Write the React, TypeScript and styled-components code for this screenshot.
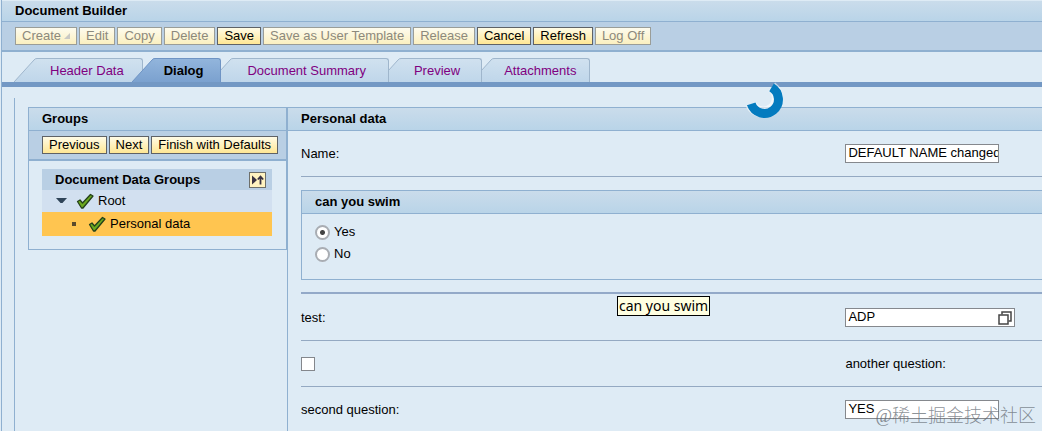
import React from "react";
import styled, { createGlobalStyle, css } from "styled-components";

const GlobalStyle = createGlobalStyle`
  * { box-sizing: border-box; }
  html, body { margin: 0; padding: 0; }
  body {
    overflow: hidden;
    background: #deebf5;
    color: #000;
    font-family: "Liberation Sans", Arial, sans-serif;
    font-size: 13px;
    line-height: 16px;
  }
`;

const headerFill = "linear-gradient(#cadceb, #b9d4e8)";
const line = "#8fb0d0";

const Page = styled.main`
  position: relative;
  display: flex;
  flex-direction: column;
  min-height: 100vh;
  margin-left: 1px;
  padding-top: 1px;
  border-left: 1px solid ${line};
`;

const TitleBar = styled.h1`
  margin: 0;
  padding: 2px 13px;
  height: 21px;
  font-size: 13px;
  line-height: 16px;
  background: ${headerFill};
  border-bottom: 1px solid ${line};
`;

const Toolbar = styled.div`
  display: flex;
  align-items: center;
  gap: 2px;
  height: 30px;
  padding: 0 13px;
  background: #b9cfe4;
  border-bottom: 2px solid ${line};
`;

const Button = styled.button`
  display: flex;
  align-items: center;
  gap: 3px;
  flex: none;
  height: 18px;
  padding: 0 6px;
  border: 1px solid #5f6266;
  background: linear-gradient(#fffbe6, #ffe794);
  color: #000;
  font: inherit;
  line-height: 16px;
  white-space: nowrap;
  &:disabled {
    border-color: #9a9d98;
    background: linear-gradient(#fdfbee, #fbf0c0);
    color: #8c897c;
  }
`;

const Tabs = styled.nav`
  display: flex;
  align-items: flex-end;
  height: 35px;
  padding-left: 12px;
  border-bottom: 5px solid #7398c4;
`;

const Tab = styled.a<{ $active?: boolean; $order: number; $left: number; $right: number }>`
  position: relative;
  z-index: ${(p) => (p.$active ? 9 : p.$order)};
  display: flex;
  height: 24px;
  margin-right: -11px;
  color: ${(p) => (p.$active ? "#000" : "#800080")};
  font-weight: ${(p) => (p.$active ? 700 : 400)};
  text-decoration: none;
  white-space: nowrap;
  span {
    padding: 4px ${(p) => p.$right}px 0 ${(p) => p.$left}px;
    border: 1px solid ${(p) => (p.$active ? "#6f94c4" : "#9fb6cc")};
    border-width: 1px 1px 0 0;
    border-top-right-radius: 3px;
    background: ${(p) =>
      p.$active ? "linear-gradient(#92b5dc, #7ba1cf)" : "linear-gradient(#d0e1ef, #bfd6ea)"};
  }
`;

const Slant = ({ active }: { active?: boolean }) => (
  <svg width="23" height="24" viewBox="0 0 23 24" aria-hidden="true">
    <defs>
      <linearGradient id={active ? "slant-on" : "slant-off"} x1="0" y1="0" x2="0" y2="1">
        <stop offset="0" stopColor={active ? "#92b5dc" : "#d0e1ef"} />
        <stop offset="1" stopColor={active ? "#7ba1cf" : "#bfd6ea"} />
      </linearGradient>
    </defs>
    <path d="M0 24 L20 2 Q21 0 23 0 V24 Z" fill={`url(#${active ? "slant-on" : "slant-off"})`} />
    <path d="M0 24 L20 2 Q21 .5 23 .5" fill="none" stroke={active ? "#6f94c4" : "#9fb6cc"} />
  </svg>
);

const Content = styled.div`
  flex: 1;
  display: flex;
  margin: 11px 0 0 12px;
  padding: 9px 0 0 13px;
  border-left: 1px solid ${line};
`;

const Groups = styled.section`
  flex: none;
  align-self: flex-start;
  width: 259px;
  height: 143px;
  border: 1px solid ${line};
`;

const PanelTitle = styled.h2`
  margin: 0;
  padding: 3px 13px;
  height: 23px;
  font-size: 13px;
  line-height: 16px;
  background: ${headerFill};
  border-bottom: 1px solid ${line};
`;

const Tree = styled.div`
  margin: 8px 14px 0 13px;
`;

const TreeHeader = styled.div`
  display: flex;
  align-items: center;
  justify-content: space-between;
  height: 21px;
  padding: 0 6px 0 13px;
  background: #b9cfe4;
  font-weight: 700;
`;

const TreeRow = styled.div<{ $selected?: boolean }>`
  display: flex;
  align-items: center;
  height: ${(p) => (p.$selected ? 24 : 22)}px;
  padding-left: ${(p) => (p.$selected ? 26 : 14)}px;
  background: ${(p) => (p.$selected ? "#ffc550" : "#d2e0f0")};
`;

const RowMark = styled.span`
  display: flex;
  width: 20px;
`;

const IconButton = styled.button`
  display: flex;
  width: 17px;
  height: 16px;
  padding: 0;
  border: 1px solid #6d6f6a;
  background: #fff3c0;
`;

const Form = styled.section`
  flex: 1;
  min-width: 0;
  border-left: 1px solid ${line};
  border-top: 1px solid ${line};
`;

const FormBody = styled.div`
  padding-left: 13px;
`;

const Row = styled.div`
  display: grid;
  grid-template-columns: 36fr 13fr;
  align-items: center;
  height: 46px;
  border-bottom: 1px solid #94a9c2;
`;

const FieldSet = styled.fieldset`
  min-width: 0;
  height: 90px;
  margin: 13px 0 12px;
  padding: 0;
  border: 1px solid ${line};
  border-right: 0;
`;

const Legend = styled.legend`
  float: left;
  width: 100%;
  height: 23px;
  padding: 3px 13px;
  background: ${headerFill};
  border-bottom: 1px solid ${line};
  font-weight: 700;
`;

const Options = styled.div`
  clear: both;
  display: flex;
  flex-direction: column;
  gap: 6px;
  padding: 10px 13px 0;
`;

const Option = styled.label`
  display: flex;
  align-items: center;
  gap: 4px;
`;

const Radio = styled.input`
  appearance: none;
  width: 15px;
  height: 15px;
  margin: 0;
  border: 2px solid #a9adb3;
  border-radius: 50%;
  background: #fff;
  &:checked {
    background: radial-gradient(circle, #444 0 2px, #fff 3px);
  }
`;

const Check = styled.input`
  appearance: none;
  display: block;
  width: 14px;
  height: 14px;
  margin: 0;
  border: 1px solid #84878c;
  background: #fff;
`;

const ThickRule = styled.hr`
  height: 2px;
  margin: 0 0 1px;
  border: 0;
  background: #93a9c8;
`;

const fieldLook = css`
  height: 19px;
  border: 1px solid #85888d;
  background: #fff;
`;

const TextInput = styled.input`
  ${fieldLook}
  width: 154px;
  padding: 0 0 2px 2px;
  color: #000;
  font: inherit;
  outline: 0;
`;

const Lookup = styled.div`
  ${fieldLook}
  display: flex;
  align-items: center;
  width: 170px;
  input {
    flex: 1;
    min-width: 0;
    height: 17px;
    padding: 0 0 2px 2px;
    border: 0;
    background: none;
    font: inherit;
  }
  button {
    display: flex;
    padding: 0 2px 0 0;
    border: 0;
    background: none;
  }
`;

const Tooltip = styled.div`
  position: absolute;
  z-index: 10;
  left: 615px;
  top: 296px;
  height: 20px;
  padding: 0 1px;
  border: 1px solid #000;
  background: #ffffe1;
  font-family: "Noto Sans", Tahoma, sans-serif;
  font-size: 14px;
  line-height: 18px;
  white-space: nowrap;
`;

const Spinner = styled.svg`
  position: absolute;
  z-index: 10;
  left: 742px;
  top: 79px;
`;

const Watermark = styled.div`
  position: absolute;
  right: 6px;
  top: 404px;
  color: rgba(90, 98, 106, 0.7);
  font-family: "Liberation Serif", "Noto Sans CJK SC", serif;
  font-size: 18px;
  font-weight: 300;
  line-height: 24px;
  white-space: nowrap;
  pointer-events: none;
`;

const Tick = () => (
  <svg width="22" height="16" viewBox="0 0 22 16" aria-hidden="true">
    <path
      d="M1.5 8.500 L4 7 L6.500 10 L14.500 1.500 L17 3 L7 15 L5.500 15 Z"
      fill="#6aa81f"
      stroke="#23401a"
      strokeWidth="1.3"
      strokeLinejoin="round"
    />
  </svg>
);

const actions: [string, boolean][] = [
  ["Create", false],
  ["Edit", false],
  ["Copy", false],
  ["Delete", false],
  ["Save", true],
  ["Save as User Template", false],
  ["Release", false],
  ["Cancel", true],
  ["Refresh", true],
  ["Log Off", false],
];

const tabs = [
  { label: "Header Data", left: 13, right: 18 },
  { label: "Dialog", left: 9, right: 17, active: true },
  { label: "Document Summary", left: 14, right: 22 },
  { label: "Preview", left: 13, right: 21 },
  { label: "Attachments", left: 10, right: 13 },
];

export default function App() {
  return (
    <Page>
      <GlobalStyle />
      <TitleBar>Document Builder</TitleBar>
      <Toolbar>
        {actions.map(([label, enabled]) => (
          <Button key={label} type="button" disabled={!enabled}>
            {label}
            {label === "Create" && (
              <svg width="6" height="6" viewBox="0 0 6 6" aria-hidden="true">
                <path d="M6 0V6H0Z" fill="#c9c9c4" />
              </svg>
            )}
          </Button>
        ))}
      </Toolbar>
      <Tabs>
        {tabs.map((t, i) => (
          <Tab key={t.label} href="#" $active={t.active} $order={6 - i} $left={t.left} $right={t.right}>
            <Slant active={t.active} />
            <span>{t.label}</span>
          </Tab>
        ))}
      </Tabs>
      <Content>
        <Groups>
          <PanelTitle>Groups</PanelTitle>
          <Toolbar>
            <Button type="button">Previous</Button>
            <Button type="button">Next</Button>
            <Button type="button">Finish with Defaults</Button>
          </Toolbar>
          <Tree>
            <TreeHeader>
              Document Data Groups
              <IconButton type="button" aria-label="Expand or collapse">
                <svg width="15" height="14" viewBox="0 0 15 14">
                  <path d="M2 2.500V11.500L7 7Z" fill="#3a3342" />
                  <path d="M10.500 11.500V4M7.800 6.500L10.500 3.500L13.200 6.500" fill="none" stroke="#3a3342" strokeWidth="1.800" />
                </svg>
              </IconButton>
            </TreeHeader>
            <TreeRow>
              <RowMark>
                <svg width="11" height="6" viewBox="0 0 11 6" aria-hidden="true">
                  <path d="M0 0H11L6.500 5H4.500Z" fill="#2f4458" />
                </svg>
              </RowMark>
              <Tick />
              Root
            </TreeRow>
            <TreeRow $selected>
              <RowMark>
                <svg width="12" height="6" viewBox="0 0 12 6" aria-hidden="true">
                  <rect x="4" y="1" width="4" height="4" fill="#5b4a2c" />
                </svg>
              </RowMark>
              <Tick />
              Personal data
            </TreeRow>
          </Tree>
        </Groups>
        <Form>
          <PanelTitle>Personal data</PanelTitle>
          <FormBody>
            <Row>
              <label htmlFor="name">Name:</label>
              <TextInput id="name" defaultValue="DEFAULT NAME changed" />
            </Row>
            <FieldSet>
              <Legend>can you swim</Legend>
              <Options>
                <Option>
                  <Radio type="radio" name="swim" defaultChecked />
                  Yes
                </Option>
                <Option>
                  <Radio type="radio" name="swim" />
                  No
                </Option>
              </Options>
            </FieldSet>
            <ThickRule />
            <Row>
              <label htmlFor="test">test:</label>
              <Lookup>
                <input id="test" defaultValue="ADP" />
                <button type="button" aria-label="Open value help">
                  <svg width="14" height="14" viewBox="0 0 14 14" fill="none" stroke="#444">
                    <path d="M4 3.500V1H13V10H10.500" strokeWidth="1.500" />
                    <rect x="1" y="4" width="9" height="9" strokeWidth="1.500" fill="#fff" />
                  </svg>
                </button>
              </Lookup>
            </Row>
            <Row>
              <Check type="checkbox" id="another" />
              <label htmlFor="another">another question:</label>
            </Row>
            <Row>
              <label htmlFor="second">second question:</label>
              <TextInput id="second" defaultValue="YES" />
            </Row>
          </FormBody>
        </Form>
      </Content>
      <Spinner width="42" height="42" viewBox="0 0 42 42" role="img" aria-label="Loading">
        <path d="M27.800 7.800A14 14 0 1 1 6.800 25.200" fill="none" stroke="#fff" strokeWidth="11" strokeOpacity="0.600" />
        <path d="M27.500 8.300A14 14 0 1 1 7.200 24.900" fill="none" stroke="#047bbf" strokeWidth="9" />
      </Spinner>
      <Tooltip role="tooltip">can you swim</Tooltip>
      <Watermark>@稀土掘金技术社区</Watermark>
    </Page>
  );
}
